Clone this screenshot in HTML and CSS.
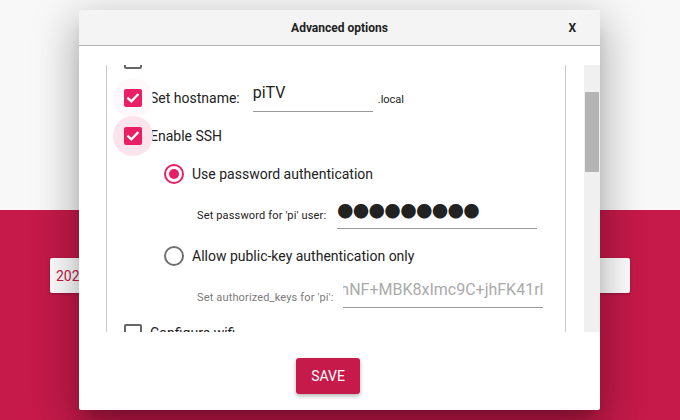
FILE: index.html
```html
<!DOCTYPE html>
<html>
<head>
<meta charset="utf-8">
<link rel="stylesheet" href="styles.css">
</head>
<body>
<div class="page">
  <div class="top"></div>
  <div class="bottom">
    <div class="card"><span class="card-text">2022-04-04-raspios-bullseye-armhf.img</span></div>
  </div>
</div>

<div class="dialog">
  <div class="dlg-header">
    <span></span>
    <span class="dlg-title">Advanced options</span>
    <span class="dlg-close">X</span>
  </div>
  <div class="dlg-body">
    <div class="viewport">
      <div class="box">
        <div class="rows">
          <div class="row row-a">
            <span class="cb"></span>
            <span class="label">Disable overscan</span>
          </div>
          <div class="row row-b">
            <span class="cb checked ripple-faint"><svg viewBox="0 0 18 18" width="18" height="18"><polyline points="4.2,9.4 7.4,12.4 13.6,5.8" fill="none" stroke="#fff" stroke-width="2.3" stroke-linecap="square"/></svg></span>
            <span class="label">Set hostname:</span>
            <span class="input host-input">piTV</span>
            <span class="suffix">.local</span>
          </div>
          <div class="row row-c">
            <span class="cb checked ripple"><svg viewBox="0 0 18 18" width="18" height="18"><polyline points="4.2,9.4 7.4,12.4 13.6,5.8" fill="none" stroke="#fff" stroke-width="2.3" stroke-linecap="square"/></svg></span>
            <span class="label">Enable SSH</span>
          </div>
          <div class="row row-d indent-radio">
            <span class="radio on"><span class="dot"></span></span>
            <span class="label">Use password authentication</span>
          </div>
          <div class="row row-e indent-field">
            <span class="small-label">Set password for 'pi' user:</span>
            <span class="input pw-input">●●●●●●●●●</span>
          </div>
          <div class="row row-f indent-radio">
            <span class="radio"></span>
            <span class="label">Allow public-key authentication only</span>
          </div>
          <div class="row row-g indent-field">
            <span class="small-label muted">Set authorized_keys for 'pi':</span>
            <span class="input key-input"><span class="key-text">hNF+MBK8xImc9C+jhFK41rl</span></span>
          </div>
          <div class="row row-h">
            <span class="cb"></span>
            <span class="label">Configure wifi</span>
          </div>
        </div>
      </div>
    </div>
    <div class="scrollbar"><div class="thumb"></div></div>
  </div>
  <div class="dlg-footer">
    <button class="save">SAVE</button>
  </div>
</div>
</body>
</html>
```

FILE: styles.css
```css
html, body {
  margin: 0;
  padding: 0;
}
body {
  width: 680px;
  height: 420px;
  overflow: hidden;
  font-family: Roboto, "Liberation Sans", sans-serif;
  color: #222;
}

.page {
  display: flex;
  flex-direction: column;
  width: 680px;
  height: 420px;
}
.top {
  height: 210px;
  background: #f8f8f8;
}
.bottom {
  height: 210px;
  background: #c51a4a;
  padding: 48px 50px 0 50px;
  box-sizing: border-box;
}
.card {
  height: 35px;
  background: #fff;
  border-radius: 2px;
  box-shadow: 0 1px 3px rgba(0,0,0,0.25);
  display: flex;
  align-items: center;
  padding-left: 6px;
  overflow: hidden;
  white-space: nowrap;
}
.card-text {
  color: #c51a4a;
  font-size: 14px;
}

/* dialog */
.dialog {
  position: absolute;
  left: 79px;
  top: 10px;
  width: 521px;
  height: 400px;
  background: #fff;
  border-radius: 2px;
  box-shadow: 0 11px 15px -7px rgba(0,0,0,0.22),
              0 24px 38px 3px rgba(0,0,0,0.16),
              0 9px 46px 8px rgba(0,0,0,0.14);
  display: flex;
  flex-direction: column;
  overflow: hidden;
}
.dlg-header {
  height: 35px;
  flex: none;
  background: #f4f4f4;
  border-bottom: 1px solid #b2b2b2;
  display: grid;
  grid-template-columns: 1fr auto 1fr;
  align-items: center;
}
.dlg-title {
  font-weight: bold;
  font-size: 12px;
  color: #222;
}
.dlg-close {
  justify-self: end;
  padding-right: 24px;
  font-weight: bold;
  font-size: 12px;
  color: #222;
}

.dlg-body {
  flex: none;
  display: flex;
  padding: 19px 0 0 27px;
  height: 267px;
}
.viewport {
  width: 478px;
  height: 267px;
  overflow: hidden;
}
.box {
  width: 460px;
  height: 400px;
  box-sizing: border-box;
  border-left: 1px solid #c8c8c8;
  border-right: 1px solid #c8c8c8;
}
.rows {
  margin-top: -25px;
  padding-left: 17px;
}
.row {
  display: flex;
  align-items: center;
  height: 38px;
}
.row-a { height: 39px; }
.row-e { height: 44px; }
.row-g { height: 39px; }
.indent-radio { padding-left: 40px; }
.indent-field { padding-left: 73px; }

.label {
  font-size: 14px;
  color: #222;
  margin-left: 8px;
  white-space: nowrap;
}
.indent-field .small-label { margin-left: 0; }

.cb {
  position: relative;
  flex: none;
  width: 18px;
  height: 18px;
  box-sizing: border-box;
  border: 2px solid #666;
  border-radius: 2px;
  background: #fff;
}
.cb.checked {
  border: none;
  background: #e91e63;
}
.cb svg {
  position: relative;
  display: block;
  z-index: 1;
}
.cb.checked.ripple::before,
.cb.checked.ripple-faint::before {
  content: "";
  position: absolute;
  left: -11px;
  top: -11px;
  width: 40px;
  height: 40px;
  border-radius: 50%;
  background: #fce4ec;
}
.cb.checked.ripple::after,
.cb.checked.ripple-faint::after {
  content: "";
  position: absolute;
  inset: 0;
  border-radius: 2px;
  background: #e91e63;
}
.cb.checked.ripple-faint::before {
  background: #fef8fa;
}

.input {
  display: block;
  height: 24px;
  line-height: 24px;
  padding-bottom: 6px;
  border-bottom: 1px solid #9a9a9a;
  font-size: 16px;
  color: #222;
  white-space: nowrap;
  overflow: hidden;
}
.host-input {
  width: 120px;
  margin-left: 13px;
  margin-bottom: 3px;
}
.suffix {
  font-size: 11px;
  color: #222;
  margin-left: 5px;
  margin-top: 2px;
}

.radio {
  flex: none;
  width: 20px;
  height: 20px;
  box-sizing: border-box;
  border: 2px solid #707070;
  border-radius: 50%;
  display: flex;
  align-items: center;
  justify-content: center;
}
.radio.on {
  border-color: #e91e63;
}
.radio .dot {
  width: 10px;
  height: 10px;
  border-radius: 50%;
  background: #e91e63;
}

.small-label {
  font-size: 11px;
  color: #222;
  white-space: nowrap;
  letter-spacing: 0.15px;
}
.small-label.muted {
  color: #7a7a7a;
  margin-top: 5px;
}
.pw-input {
  width: 200px;
  margin-left: 11px;
  margin-bottom: 3px;
  font-family: "Noto Sans CJK JP", "DejaVu Sans", sans-serif;
  font-size: 16px;
  letter-spacing: -0.2px;
  color: #222;
}
.key-input {
  width: 200px;
  margin-left: 10px;
  margin-bottom: 3px;
  display: flex;
  justify-content: flex-end;
  color: #aaa;
  height: 23px;
  line-height: 23px;
}
.key-text {
  flex: none;
}

.scrollbar {
  width: 16px;
  height: 267px;
  background: #f0f0f0;
  flex: none;
  display: flex;
  justify-content: center;
}
.thumb {
  width: 14px;
  height: 80px;
  margin-top: 27px;
  background: #b4b4b4;
}

.dlg-footer {
  flex: 1;
  display: flex;
  justify-content: center;
  align-items: flex-start;
  padding: 26px 23px 0 0;
}
.save {
  width: 64px;
  height: 36px;
  border: none;
  border-radius: 3px;
  background: #c51a4a;
  color: #fff;
  font-family: Roboto, "Liberation Sans", sans-serif;
  font-size: 14px;
  padding: 0;
  box-shadow: 0 2px 4px rgba(0,0,0,0.3);
}
```
